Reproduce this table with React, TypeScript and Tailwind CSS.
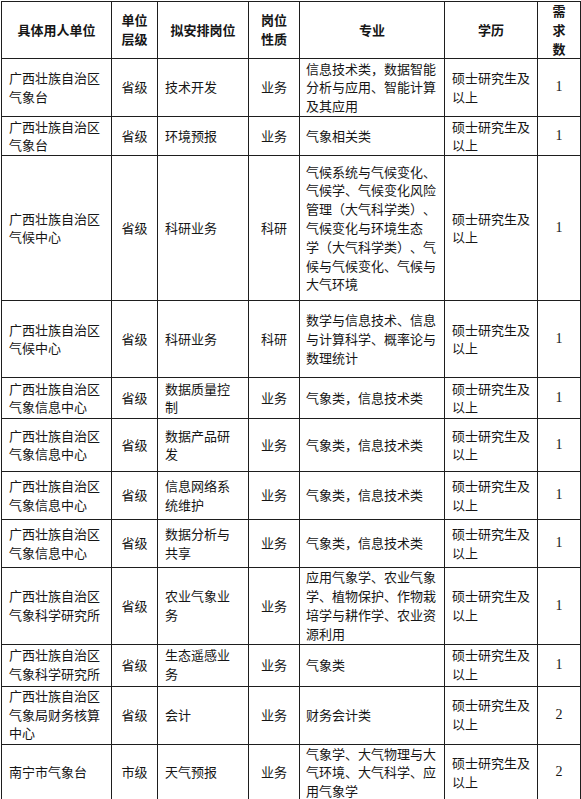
type Row = {
  unit: string[];
  level: string;
  post: string[];
  kind: string;
  major: string[];
  count: string;
  h: string;
};

const edu = ["硕士研究生及", "以上"];

const rows: Row[] = [
  {
    unit: ["广西壮族自治区", "气象台"],
    level: "省级",
    post: ["技术开发"],
    kind: "业务",
    major: ["信息技术类，数据智能", "分析与应用、智能计算", "及其应用"],
    count: "1",
    h: "h-[58px]",
  },
  {
    unit: ["广西壮族自治区", "气象台"],
    level: "省级",
    post: ["环境预报"],
    kind: "业务",
    major: ["气象相关类"],
    count: "1",
    h: "h-[39px]",
  },
  {
    unit: ["广西壮族自治区", "气候中心"],
    level: "省级",
    post: ["科研业务"],
    kind: "科研",
    major: [
      "气候系统与气候变化、",
      "气候学、气候变化风险",
      "管理（大气科学类）、",
      "气候变化与环境生态",
      "学（大气科学类）、气",
      "候与气候变化、气候与",
      "大气环境",
    ],
    count: "1",
    h: "h-[145px]",
  },
  {
    unit: ["广西壮族自治区", "气候中心"],
    level: "省级",
    post: ["科研业务"],
    kind: "科研",
    major: ["数学与信息技术、信息", "与计算科学、概率论与", "数理统计"],
    count: "1",
    h: "h-[77px]",
  },
  {
    unit: ["广西壮族自治区", "气象信息中心"],
    level: "省级",
    post: ["数据质量控", "制"],
    kind: "业务",
    major: ["气象类，信息技术类"],
    count: "1",
    h: "h-[41px]",
  },
  {
    unit: ["广西壮族自治区", "气象信息中心"],
    level: "省级",
    post: ["数据产品研", "发"],
    kind: "业务",
    major: ["气象类，信息技术类"],
    count: "1",
    h: "h-[53px]",
  },
  {
    unit: ["广西壮族自治区", "气象信息中心"],
    level: "省级",
    post: ["信息网络系", "统维护"],
    kind: "业务",
    major: ["气象类，信息技术类"],
    count: "1",
    h: "h-[48px]",
  },
  {
    unit: ["广西壮族自治区", "气象信息中心"],
    level: "省级",
    post: ["数据分析与", "共享"],
    kind: "业务",
    major: ["气象类，信息技术类"],
    count: "1",
    h: "h-[48px]",
  },
  {
    unit: ["广西壮族自治区", "气象科学研究所"],
    level: "省级",
    post: ["农业气象业", "务"],
    kind: "业务",
    major: ["应用气象学、农业气象", "学、植物保护、作物栽", "培学与耕作学、农业资", "源利用"],
    count: "1",
    h: "h-[76px]",
  },
  {
    unit: ["广西壮族自治区", "气象科学研究所"],
    level: "省级",
    post: ["生态遥感业", "务"],
    kind: "业务",
    major: ["气象类"],
    count: "1",
    h: "h-[42px]",
  },
  {
    unit: ["广西壮族自治区", "气象局财务核算", "中心"],
    level: "省级",
    post: ["会计"],
    kind: "业务",
    major: ["财务会计类"],
    count: "2",
    h: "h-[58px]",
  },
  {
    unit: ["南宁市气象台"],
    level: "市级",
    post: ["天气预报"],
    kind: "业务",
    major: ["气象学、大气物理与大", "气环境、大气科学、应", "用气象学"],
    count: "2",
    h: "h-[55px]",
  },
];

const cell = "border border-[#1e1e1e] align-middle p-0";

function Lines({ lines }: { lines: string[] }) {
  return (
    <>
      {lines.map((l, i) => (
        <div key={i} className="whitespace-nowrap">
          {l}
        </div>
      ))}
    </>
  );
}

export default function App() {
  return (
    <div className="w-[581px] h-[799px] bg-white overflow-hidden">
      <table className="mt-px ml-px w-[579px] table-fixed border-collapse font-['Noto_Sans_CJK_SC',sans-serif] text-[13px] leading-[18.8px] text-[#161616] [text-spacing-trim:space-all]">
        <colgroup>
          <col className="w-[110px]" />
          <col className="w-[46px]" />
          <col className="w-[91px]" />
          <col className="w-[51px]" />
          <col className="w-[145px]" />
          <col className="w-[93px]" />
          <col className="w-[43px]" />
        </colgroup>
        <thead>
          <tr className="h-[56px] font-bold text-center">
            <th className={cell}>具体用人单位</th>
            <th className={cell}>
              <Lines lines={["单位", "层级"]} />
            </th>
            <th className={cell}>拟安排岗位</th>
            <th className={cell}>
              <Lines lines={["岗位", "性质"]} />
            </th>
            <th className={cell}>专业</th>
            <th className={cell}>学历</th>
            <th className={cell}>
              <Lines lines={["需", "求", "数"]} />
            </th>
          </tr>
        </thead>
        <tbody>
          {rows.map((r, i) => (
            <tr key={i} className={r.h}>
              <td className={`${cell} pl-[7px]`}>
                <Lines lines={r.unit} />
              </td>
              <td className={`${cell} text-center`}>{r.level}</td>
              <td className={`${cell} pl-[7px]`}>
                <Lines lines={r.post} />
              </td>
              <td className={`${cell} text-center`}>{r.kind}</td>
              <td className={`${cell} pl-[6px]`}>
                <Lines lines={r.major} />
              </td>
              <td className={`${cell} pl-[7px]`}>
                <Lines lines={edu} />
              </td>
              <td className={`${cell} text-center font-['Liberation_Serif',serif] text-[14px]`}>
                {r.count}
              </td>
            </tr>
          ))}
        </tbody>
      </table>
    </div>
  );
}
